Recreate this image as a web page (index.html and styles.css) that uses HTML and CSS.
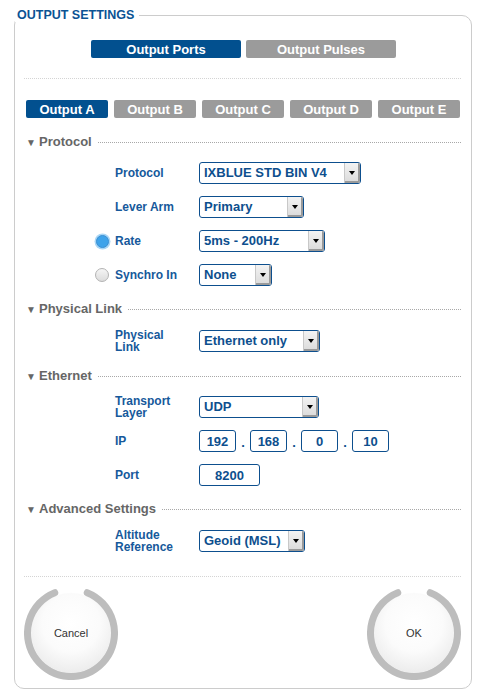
FILE: index.html
```html
<!DOCTYPE html>
<html>
<head>
<meta charset="utf-8">
<link rel="stylesheet" href="styles.css">
</head>
<body>
<fieldset class="panel">
  <legend class="panel-title">OUTPUT SETTINGS</legend>
  <div class="tabs-top">
    <span class="tab tab-wide active">Output Ports</span>
    <span class="tab tab-wide">Output Pulses</span>
  </div>
  <div class="sep sep-top"></div>
  <div class="tabs-out">
    <span class="tab tab-out active">Output A</span>
    <span class="tab tab-out">Output B</span>
    <span class="tab tab-out">Output C</span>
    <span class="tab tab-out">Output D</span>
    <span class="tab tab-out">Output E</span>
  </div>

  <div class="sec-head sec-first"><span class="tri">▼</span><span class="sec-title">Protocol</span><span class="sec-line"></span></div>
  <div class="rows">
    <div class="row"><span class="radio-slot"></span><span class="label">Protocol</span><span class="select w-proto"><span class="sel-text">IXBLUE STD BIN V4</span><span class="sel-btn"></span></span></div>
    <div class="row"><span class="radio-slot"></span><span class="label">Lever Arm</span><span class="select w-lever"><span class="sel-text">Primary</span><span class="sel-btn"></span></span></div>
    <div class="row"><span class="radio-slot"><span class="radio on"></span></span><span class="label">Rate</span><span class="select w-rate"><span class="sel-text">5ms - 200Hz</span><span class="sel-btn"></span></span></div>
    <div class="row"><span class="radio-slot"><span class="radio"></span></span><span class="label">Synchro In</span><span class="select w-sync"><span class="sel-text">None</span><span class="sel-btn"></span></span></div>
  </div>

  <div class="sec-head"><span class="tri">▼</span><span class="sec-title">Physical Link</span><span class="sec-line"></span></div>
  <div class="rows rows-b">
    <div class="row"><span class="radio-slot"></span><span class="label">Physical<br>Link</span><span class="select w-eth"><span class="sel-text">Ethernet only</span><span class="sel-btn"></span></span></div>
  </div>

  <div class="sec-head sec-c"><span class="tri">▼</span><span class="sec-title">Ethernet</span><span class="sec-line"></span></div>
  <div class="rows">
    <div class="row"><span class="radio-slot"></span><span class="label">Transport<br>Layer</span><span class="select w-udp"><span class="sel-text">UDP</span><span class="sel-btn"></span></span></div>
    <div class="row"><span class="radio-slot"></span><span class="label">IP</span>
      <span class="ip">
        <span class="box w-ip">192</span><span class="dot">.</span><span class="box w-ip">168</span><span class="dot">.</span><span class="box w-ip">0</span><span class="dot">.</span><span class="box w-ip">10</span>
      </span>
    </div>
    <div class="row"><span class="radio-slot"></span><span class="label">Port</span><span class="box w-port">8200</span></div>
  </div>

  <div class="sec-head"><span class="tri">▼</span><span class="sec-title">Advanced Settings</span><span class="sec-line"></span></div>
  <div class="rows rows-b">
    <div class="row"><span class="radio-slot"></span><span class="label">Altitude<br>Reference</span><span class="select w-geo"><span class="sel-text">Geoid (MSL)</span><span class="sel-btn"></span></span></div>
  </div>

  <div class="sep sep-bottom"></div>

  <div class="actions">
    <div class="round-btn">
      <svg class="ring" viewBox="0 0 94 94" width="94" height="94"><path d="M63.2 6.7 A43.5 43.5 0 1 1 30.8 6.7" fill="none" stroke="#bdbdbd" stroke-width="7" stroke-linecap="round"/></svg>
      <span class="sphere">Cancel</span>
    </div>
    <div class="round-btn">
      <svg class="ring" viewBox="0 0 94 94" width="94" height="94"><path d="M63.2 6.7 A43.5 43.5 0 1 1 30.8 6.7" fill="none" stroke="#bdbdbd" stroke-width="7" stroke-linecap="round"/></svg>
      <span class="sphere">OK</span>
    </div>
  </div>
</fieldset>
</body>
</html>
```

FILE: styles.css
```css
* { box-sizing: border-box; }
body {
  margin: 0;
  background: #fff;
  font-family: "Liberation Sans", Arial, sans-serif;
}
.panel {
  margin: 8px 0 0 14px;
  width: 458px;
  min-width: 0;
  border: 1px solid #cccccc;
  border-radius: 10px;
  padding: 0 10px 8px 11px;
}
.panel-title {
  margin-left: -11px;
  padding: 0 5px 0 2px;
  font-size: 12.5px;
  line-height: 14px;
  font-weight: bold;
  color: #0b5394;
}
.tabs-top {
  margin-top: 18px;
  display: flex;
  justify-content: center;
  gap: 5px;
}
.tab {
  display: flex;
  align-items: center;
  justify-content: center;
  height: 18px;
  border-radius: 2px;
  background: #9b9b9b;
  color: #fff;
  font-size: 13px;
  font-weight: bold;
}
.tab.active { background: #02508f; }
.tab-wide { width: 150px; }
.sep {
  border-top: 1px dotted #d4d4d4;
  margin-left: -2px;
}
.sep-top { margin-top: 20px; }
.tabs-out {
  margin-top: 21px;
  display: flex;
  gap: 6px;
}
.tab-out { width: 82px; }

.sec-head {
  margin-top: 16px;
  height: 14px;
  display: flex;
  align-items: center;
  color: #666;
  font-weight: bold;
}
.sec-first { margin-top: 17px; }
.sec-c { margin-top: 17px; }
.tri {
  font-size: 10px;
  line-height: 10px;
  width: 13px;
  padding-top: 1px;
}
.sec-title {
  font-size: 13px;
  line-height: 14px;
}
.sec-line {
  flex: 1;
  margin-left: 6px;
  border-top: 1px dotted #a8a8a8;
}
.rows {
  margin-top: 13px;
  margin-left: 69px;
  display: flex;
  flex-direction: column;
  gap: 12px;
}
.rows-b { margin-top: 14px; }
.row {
  display: flex;
  align-items: center;
  height: 22px;
}
.radio-slot {
  width: 20px;
  display: flex;
  align-items: center;
}
.label {
  width: 84px;
  font-size: 12px;
  line-height: 12px;
  font-weight: bold;
  color: #16599b;
}
.radio {
  width: 14px;
  height: 14px;
  border-radius: 50%;
  border: 1px solid #b3b3b3;
  background: linear-gradient(#f5f5f5, #dcdcdc);
}
.radio.on {
  border: 1px solid #3a8fd3;
  background: #3ea3ea;
  box-shadow: 0 0 0 1.5px #a9d6f5;
  width: 13px;
  height: 13px;
  margin-left: 1px;
}
.select {
  display: flex;
  height: 22px;
  border: 1px solid #0d4f8e;
  border-radius: 3px;
  background: #fff;
  overflow: hidden;
}
.sel-text {
  flex: 1;
  padding-left: 4px;
  font-size: 13px;
  line-height: 20px;
  font-weight: bold;
  color: #0d4f8e;
  white-space: nowrap;
}
.sel-btn {
  width: 16px;
  height: 20px;
  position: relative;
  background: linear-gradient(#f3f3f3, #dadada);
  border-left: 1px solid #c8c8c8;
  box-shadow: inset -2px -2px 0 #9a9a9a;
}
.sel-btn::after {
  content: "";
  position: absolute;
  left: 4px;
  top: 8px;
  border-left: 3px solid transparent;
  border-right: 3px solid transparent;
  border-top: 4px solid #000;
}
.w-proto { width: 162px; }
.w-lever { width: 105px; }
.w-rate { width: 126px; }
.w-sync { width: 73px; }
.w-eth { width: 121px; }
.w-udp { width: 120px; }
.w-geo { width: 106px; }

.ip { display: flex; align-items: center; }
.box {
  display: flex;
  align-items: center;
  justify-content: center;
  height: 22px;
  border: 1px solid #0d4f8e;
  border-radius: 3px;
  font-size: 13px;
  font-weight: bold;
  color: #0d4f8e;
}
.w-ip { width: 37px; }
.w-port { width: 61px; }
.dot {
  width: 14px;
  text-align: center;
  font-size: 13px;
  font-weight: bold;
  color: #0d4f8e;
  padding-top: 2px;
}
.sep-bottom { margin-top: 24px; }
.actions {
  margin-top: 9px;
  margin-left: -2px;
  display: flex;
  justify-content: space-between;
}
.round-btn {
  position: relative;
  width: 94px;
  height: 94px;
  display: flex;
  align-items: center;
  justify-content: center;
}
.ring {
  position: absolute;
  left: 0;
  top: 0;
}
.sphere {
  width: 80px;
  height: 80px;
  border-radius: 50%;
  display: flex;
  align-items: center;
  justify-content: center;
  background: radial-gradient(circle at 50% 38%, #ffffff 0%, #fbfbfb 45%, #ebebeb 80%, #dcdcdc 100%);
  box-shadow: 0 2px 3px rgba(0, 0, 0, 0.12);
  font-size: 11px;
  color: #333;
}
```
